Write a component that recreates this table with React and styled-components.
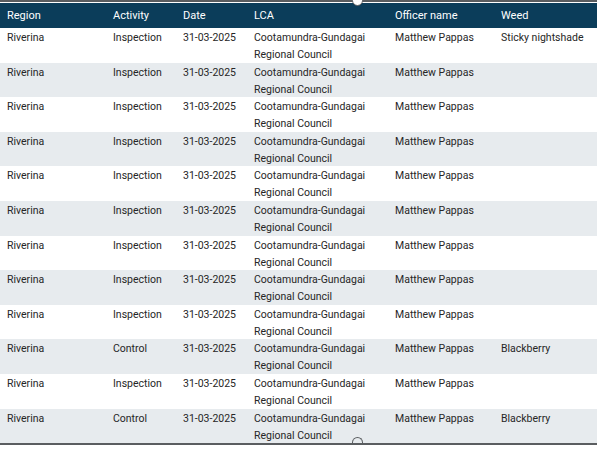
import styled, { createGlobalStyle } from 'styled-components';

const GlobalStyle = createGlobalStyle`
  html, body {
    margin: 0;
    padding: 0;
    background: #fff;
  }
  body {
    font-family: Roboto, "Liberation Sans", sans-serif;
  }
`;

const Frame = styled.div`
  position: relative;
  width: 597px;
  border-top: 2px solid #5a5d60;
  border-bottom: 2px solid #5a5d60;
  padding-top: 1px;
`;

const TopHandle = styled.span`
  position: absolute;
  left: 352px;
  top: -7px;
  width: 11px;
  height: 11px;
  border-radius: 50%;
  background: #fff;
  border: 1.5px solid #5a5d60;
  box-sizing: border-box;
`;

const BottomHandle = styled.span`
  position: absolute;
  left: 352px;
  bottom: 0;
  width: 11px;
  height: 6px;
  border: 1.5px solid #5a5d60;
  border-bottom: none;
  border-radius: 6px 6px 0 0;
  box-sizing: border-box;
`;

const Grid = styled.div`
  display: grid;
  grid-template-columns: 106px 70px 71px 141px 106px 1fr;
  font-size: 10.5px;
  color: #262626;
`;

const HeadRow = styled.div`
  display: contents;
`;

const HeadCell = styled.div`
  background: #0b3d5a;
  color: #fff;
  height: 25px;
  padding-left: 7px;
  display: flex;
  align-items: center;
  font-size: 11px;
`;

const Row = styled.div`
  display: grid;
  grid-column: 1 / -1;
  grid-template-columns: subgrid;
  height: 34.6px;
  background: ${props => props.$striped ? '#e7ebee' : '#fff'};
`;

const Cell = styled.div`
  padding: 1px 0 0 7px;
  line-height: 17px;
`;

const columns = ['Region', 'Activity', 'Date', 'LCA', 'Officer name', 'Weed'];

const rows = [
  ['Inspection', 'Sticky nightshade'],
  ['Inspection', ''],
  ['Inspection', ''],
  ['Inspection', ''],
  ['Inspection', ''],
  ['Inspection', ''],
  ['Inspection', ''],
  ['Inspection', ''],
  ['Inspection', ''],
  ['Control', 'Blackberry'],
  ['Inspection', ''],
  ['Control', 'Blackberry'],
];

const App = () => (
  <>
    <GlobalStyle />
    <Frame>
      <TopHandle />
      <Grid>
        <HeadRow>
          {columns.map(c => <HeadCell key={c}>{c}</HeadCell>)}
        </HeadRow>
        {rows.map(([activity, weed], i) => (
          <Row key={i} $striped={i % 2 === 1}>
            <Cell>Riverina</Cell>
            <Cell>{activity}</Cell>
            <Cell>31-03-2025</Cell>
            <Cell>Cootamundra-Gundagai<br />Regional Council</Cell>
            <Cell>Matthew Pappas</Cell>
            <Cell>{weed}</Cell>
          </Row>
        ))}
      </Grid>
      <BottomHandle />
    </Frame>
  </>
);

export default App;
